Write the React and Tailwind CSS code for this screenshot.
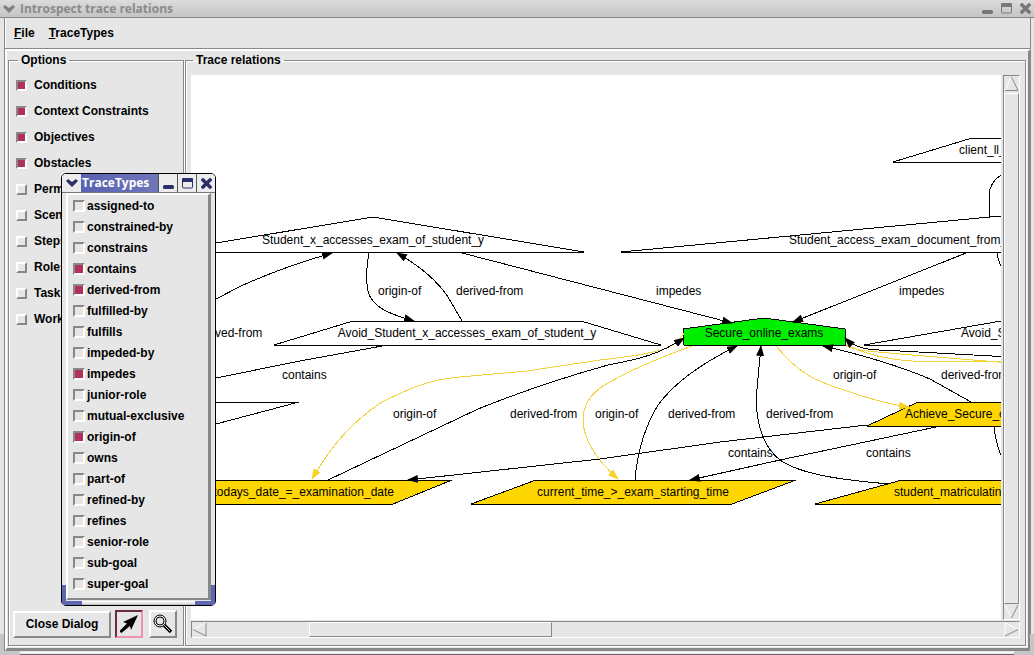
import { useState } from "react";

const OPTIONS = [
  { name: "Conditions", on: true },
  { name: "Context Constraints", on: true },
  { name: "Objectives", on: true },
  { name: "Obstacles", on: true },
  { name: "Permissions", on: false },
  { name: "Scenarios", on: false },
  { name: "Steps", on: false },
  { name: "Roles", on: false },
  { name: "Tasks", on: false },
  { name: "Workflows", on: false },
];

const TRACE_TYPES = [
  "assigned-to",
  "constrained-by",
  "constrains",
  "contains",
  "derived-from",
  "fulfilled-by",
  "fulfills",
  "impeded-by",
  "impedes",
  "junior-role",
  "mutual-exclusive",
  "origin-of",
  "owns",
  "part-of",
  "refined-by",
  "refines",
  "senior-role",
  "sub-goal",
  "super-goal",
];

const ACTIVE_TYPES = ["contains", "derived-from", "impedes", "origin-of"];

const GOLD = "#ffd700";
const GREEN = "#00ee00";

// anchor defaults to "start"
const NODES = [
  { points: "162,252 373,217 584,252", text: "Student_x_accesses_exam_of_student_y", x: 373, y: 244, anchor: "middle" },
  { points: "621,252 990,217 1200,216 1200,252", text: "Student_access_exam_document_from_server", x: 789, y: 244 },
  { points: "893,162 972,138 1200,138 1200,162", text: "client_ll_connection", x: 959, y: 154 },
  { points: "274,345 353,321 581,321 661,345", text: "Avoid_Student_x_accesses_exam_of_student_y", x: 467, y: 337, anchor: "middle" },
  { points: "683,329 764,318 845,329 845,345 684,345", text: "Secure_online_exams", x: 764, y: 337, anchor: "middle", fill: GREEN },
  { points: "864,345 1001,321 1200,321 1200,345", text: "Avoid_Student_access", x: 961, y: 337 },
  { points: "100,402 299,402 216,424 100,424", text: "", x: 0, y: 0 },
  { points: "100,480 452,480 393,504 100,504", text: "todays_date_=_examination_date", x: 394, y: 496, anchor: "end", fill: GOLD },
  { points: "471,504 536,480 796,480 732,504", text: "current_time_>_exam_starting_time", x: 633, y: 496, anchor: "middle", fill: GOLD },
  { points: "815,504 902,480 1200,480 1200,504", text: "student_matriculating", x: 894, y: 496, fill: GOLD },
  { points: "867,426 918,402 1200,402 1200,426", text: "Achieve_Secure_online_exams", x: 905, y: 418, fill: GOLD },
];

const EDGES = [
  { d: "M200 307L216 299L241 286Q283 267 332 253", arrow: true },
  { d: "M369 253C366 268 366 280 368 291C372 308 390 314 414 321", arrow: true },
  { d: "M462 321L448 297Q432 273 397 253", arrow: true },
  { d: "M462 253L732 323", arrow: true },
  { d: "M966 253L793 322", arrow: true },
  { d: "M382 346L300 361L216 378L190 384" },
  { d: "M684 333C676 345 674 352 600 360L527 371L460 377C425 380 405 391 382 402C350 423 330 448 312 479", arrow: true, gold: true },
  { d: "M328 480L440 427L478 409Q540 384 608 365C640 359 660 354 684 338", arrow: true },
  { d: "M692 346C650 361 625 373 603 386C570 408 580 445 618 479", arrow: true, gold: true },
  { d: "M635 480C637 455 643 430 658 405C675 382 700 364 737 346", arrow: true },
  { d: "M890 484C840 480 800 474 780 460C763 447 757 425 756 400L761 346", arrow: true },
  { d: "M776 346C800 374 812 380 850 392Q885 404 909 407", arrow: true, gold: true },
  { d: "M971 402L930 379Q885 360 823 346", arrow: true },
  { d: "M846 345C852 350 865 351 900 354L1010 363", gold: true },
  { d: "M846 345C870 356 890 360 912 361L1010 362", gold: true },
  { d: "M1010 357L900 351C870 350 857 350 845 338", arrow: true },
  { d: "M867 425L720 442L600 459L408 480", arrow: true },
  { d: "M936 427L780 460L690 480", arrow: true },
  { d: "M989 217V195Q990 182 1001 175" },
  { d: "M997 253Q998 262 1003 269" },
  { d: "M994 427Q996 445 1003 460" },
];

const EDGE_LABELS = [
  ["origin-of", 378, 295],
  ["derived-from", 456, 295],
  ["impedes", 656, 295],
  ["impedes", 899, 295],
  ["derived-from", 195, 337],
  ["contains", 282, 379],
  ["origin-of", 833, 379],
  ["derived-from", 941, 379],
  ["origin-of", 393, 418],
  ["derived-from", 510, 418],
  ["origin-of", 595, 418],
  ["derived-from", 668, 418],
  ["derived-from", 766, 418],
  ["contains", 728, 457],
  ["contains", 866, 457],
];

function Graph() {
  return (
    <svg className="block h-full w-full bg-white" aria-label="Trace relations">
      <defs>
        <marker id="head" markerWidth="11" markerHeight="8" refX="10" refY="4" orient="auto" markerUnits="userSpaceOnUse">
          <path d="M0 0L11 4L0 8Z" fill="#000" />
        </marker>
        <marker id="headGold" markerWidth="11" markerHeight="8" refX="10" refY="4" orient="auto" markerUnits="userSpaceOnUse">
          <path d="M0 0L11 4L0 8Z" fill="#f5d327" />
        </marker>
      </defs>
      {/* scroll offset of the visible part */}
      <g transform="translate(-191 -75)">
        {NODES.map((n, i) => (
          <polygon key={i} points={n.points} fill={n.fill || "#fff"} stroke="#000" shapeRendering="crispEdges" />
        ))}
        {EDGES.map((e, i) => (
          <path
            key={i}
            d={e.d}
            fill="none"
            stroke={e.gold ? "#f2d33c" : "#000"}
            shapeRendering="crispEdges"
            markerEnd={e.arrow ? (e.gold ? "url(#headGold)" : "url(#head)") : undefined}
          />
        ))}
        {NODES.map((n, i) => (
          <text key={i} x={n.x} y={n.y} textAnchor={n.anchor || "start"} className="text-[12px]">
            {n.text}
          </text>
        ))}
        {EDGE_LABELS.map(([text, x, y], i) => (
          <text key={i} x={x} y={y} className="text-[12px]">
            {text}
          </text>
        ))}
      </g>
    </svg>
  );
}

function OptionCheck({ item }) {
  const [on, setOn] = useState(item.on);
  return (
    <label className="flex h-[26px] items-center gap-[7px]">
      <input
        type="checkbox"
        checked={on}
        onChange={() => setOn(!on)}
        className="size-[11px] shrink-0 appearance-none border-2 border-t-white border-r-[#888] border-b-[#888] border-l-white checked:border-t-[#888] checked:border-r-white checked:border-b-white checked:border-l-[#888] checked:bg-[#b03060]"
      />
      {item.name}
    </label>
  );
}

function TypeCheck({ name }) {
  const [on, setOn] = useState(ACTIVE_TYPES.includes(name));
  return (
    <label className="flex h-[21px] items-center gap-[2px] font-bold">
      <input
        type="checkbox"
        checked={on}
        onChange={() => setOn(!on)}
        className="size-3 shrink-0 appearance-none border-2 border-t-[#888] border-r-white border-b-white border-l-[#888] checked:bg-[#b03060]"
      />
      {name}
    </label>
  );
}

function MenuChevron({ color }) {
  return (
    <svg width="12" height="8" viewBox="0 0 12 8" aria-hidden="true">
      <path d="M0 2L2 0L6 3L10 0L12 2L6 8Z" fill={color} />
    </svg>
  );
}

function MinimizeIcon({ color }) {
  return (
    <svg width="11" height="11" viewBox="0 0 11 11" aria-hidden="true">
      <rect x="0" y="7" width="11" height="4" rx="1.5" fill={color} />
    </svg>
  );
}

function MaximizeIcon({ color }) {
  return (
    <svg width="11" height="11" viewBox="0 0 11 11" aria-hidden="true">
      <rect x="0.5" y="0.5" width="10" height="9.5" rx="1" fill="none" stroke={color} />
      <rect x="0" y="0" width="11" height="4" rx="1" fill={color} />
    </svg>
  );
}

function CloseIcon({ color }) {
  return (
    <svg width="11" height="11" viewBox="0 0 11 11" aria-hidden="true">
      <path d="M2 2L9 9M9 2L2 9" stroke={color} strokeWidth="3.4" strokeLinecap="square" />
    </svg>
  );
}

function ScrollArrow({ label, light, dark }) {
  return (
    <button type="button" aria-label={label} className="size-[15px] shrink-0">
      <svg width="15" height="15" viewBox="0 0 15 15" fill="none">
        <path d={light} stroke="#fff" />
        <path d={dark} stroke="#888" />
      </svg>
    </button>
  );
}

function TraceTypesWindow() {
  return (
    <div className="absolute top-[173px] left-[61px] flex w-[155px] flex-col rounded-[5px] border border-black bg-[#e6e6e6]">
      <div className="flex h-[19px] items-stretch rounded-t-[4px] border-b border-[#777] bg-[#ececec]">
        <button type="button" aria-label="Window menu" className="flex w-[19px] items-center justify-center">
          <MenuChevron color="#2a2f66" />
        </button>
        <h2 className="flex flex-1 items-center bg-linear-to-r from-[#5a62b2] to-[#6f76b8] pl-px font-['Open_Sans',sans-serif] text-[12px] font-bold text-white">
          TraceTypes
        </h2>
        <button type="button" aria-label="Minimize" className="flex w-[19px] items-center justify-center border-l border-[#555]">
          <MinimizeIcon color="#2a2f66" />
        </button>
        <button type="button" aria-label="Maximize" className="flex w-[19px] items-center justify-center border-l border-[#555]">
          <MaximizeIcon color="#2a2f66" />
        </button>
        <button type="button" aria-label="Close" className="flex w-[19px] items-center justify-center border-l border-[#555]">
          <CloseIcon color="#2a2f66" />
        </button>
      </div>
      <div className="mx-1 border-t-2 border-r-3 border-b-2 border-l-2 border-t-white border-r-[#888] border-b-[#888] border-l-white pl-[5px]">
        {TRACE_TYPES.map((name) => (
          <TypeCheck key={name} name={name} />
        ))}
        <div className="h-1" />
      </div>
      <div className="mt-px h-1 border-y border-t-white border-b-[#bbb]" />
      {/* resize grips */}
      <div className="absolute bottom-0 left-0 h-5 w-5 rounded-bl-[4px] border-b-4 border-l-4 border-[#5f67b5]" />
      <div className="absolute right-0 bottom-0 h-5 w-5 rounded-br-[4px] border-r-4 border-b-4 border-[#5f67b5]" />
    </div>
  );
}

export default function App() {
  return (
    <div className="relative flex h-screen flex-col overflow-hidden bg-[#e6e6e6] font-['Liberation_Sans',Arial,sans-serif] text-[12px] leading-[14px] text-black">
      <header className="flex h-[18px] shrink-0 items-center border-b border-[#888] bg-linear-to-b from-[#dcdcdc] to-[#c4c4c4] pl-[3px]">
        <button type="button" aria-label="Window menu">
          <MenuChevron color="#808080" />
        </button>
        <h1 className="flex-1 pl-[5px] font-['Open_Sans',sans-serif] text-[12px] font-bold text-[#8a8a8a]">
          Introspect trace relations
        </h1>
        <div className="flex items-center gap-2 pr-[3px]">
          <button type="button" aria-label="Minimize">
            <MinimizeIcon color="#777" />
          </button>
          <button type="button" aria-label="Maximize">
            <MaximizeIcon color="#777" />
          </button>
          <button type="button" aria-label="Close">
            <CloseIcon color="#777" />
          </button>
        </div>
      </header>

      {/* resize grips of the outer window, under its frame */}
      <div className="absolute bottom-0 left-0 h-[21px] w-5 border-b-4 border-l-4 border-[#c6c6c6]" />
      <div className="absolute right-0 bottom-0 h-[21px] w-5 border-r-4 border-b-4 border-[#c6c6c6]" />

      <div className="mr-[3px] ml-[4px] flex min-h-0 flex-1 flex-col border-l border-[#888] shadow-[inset_1px_0_0_#fff]">
        <nav className="flex h-[31px] shrink-0 items-center gap-[14px] border-r border-b border-[#888] pl-[9px] font-bold">
          <button type="button">
            <span className="underline">F</span>ile
          </button>
          <button type="button">
            <span className="underline">T</span>raceTypes
          </button>
        </nav>

        <main className="flex min-h-0 flex-1 gap-px border-t-2 border-r-3 border-b-3 border-l-2 border-t-white border-r-[#888] border-b-[#888] border-l-white pt-[2px] pr-[2px] pb-[2px] pl-px">
          <fieldset className="flex w-[176px] shrink-0 flex-col border border-[#888] shadow-[1px_1px_0_#fff,inset_1px_1px_0_#fff]">
            <legend className="ml-[9px] px-[3px] font-bold">Options</legend>
            <div className="flex h-full flex-col justify-between pt-[5px] pb-[7px]">
              <div className="pl-[7px] font-bold">
                {OPTIONS.map((item) => (
                  <OptionCheck key={item.name} item={item} />
                ))}
              </div>
              <div className="flex items-center gap-1 pl-1">
                <button
                  type="button"
                  className="h-[27px] w-[98px] border-2 border-t-white border-r-[#888] border-b-[#888] border-l-white font-bold"
                >
                  Close Dialog
                </button>
                <button
                  type="button"
                  aria-label="Select"
                  className="flex size-[28px] items-center justify-center border-2 border-t-[#6e2a40] border-r-[#f092ac] border-b-[#f092ac] border-l-[#6e2a40]"
                >
                  <svg width="20" height="20" viewBox="0 0 20 20">
                    <path d="M19 1L4 8L8 9.5L1 16.5V18L2.5 19L11 12L12 16Z" fill="#000" />
                  </svg>
                </button>
                <button
                  type="button"
                  aria-label="Zoom"
                  className="ml-[2px] flex size-[28px] items-center justify-center border-2 border-t-white border-r-[#888] border-b-[#888] border-l-white"
                >
                  <svg width="20" height="20" viewBox="0 0 20 20" fill="none">
                    <circle cx="7" cy="7" r="6" stroke="#000" />
                    <circle cx="7" cy="7" r="4" stroke="#000" />
                    <path d="M11 11L18 18" stroke="#000" strokeWidth="3.5" />
                    <path d="M11 11L17 17" stroke="#ccc" strokeWidth="1" />
                  </svg>
                </button>
              </div>
            </div>
          </fieldset>

          <fieldset className="min-w-0 flex-1 border border-[#888] shadow-[1px_1px_0_#fff,inset_1px_1px_0_#fff]">
            <legend className="ml-[7px] px-[3px] font-bold">Trace relations</legend>
            <div className="flex h-full flex-col pt-2 pr-[5px] pb-[7px] pl-[5px]">
              <div className="flex min-h-0 flex-1 gap-[2px]">
                <div className="min-w-0 flex-1">
                  <Graph />
                </div>
                <div className="flex w-[17px] flex-col border border-t-[#888] border-r-white border-b-white border-l-[#888]">
                  <ScrollArrow label="Scroll up" light="M7.5 1L1 14.5" dark="M7.5 1L14 14.5H1" />
                  <div className="mt-[2px] flex-1 border border-t-white border-r-[#888] border-b-[#888] border-l-white" />
                  <ScrollArrow label="Scroll down" light="M1 1L7.5 14" dark="M14 1L7.5 14" />
                </div>
              </div>
              <div className="mt-px flex h-[17px] border border-t-[#888] border-r-white border-b-white border-l-[#888]">
                <ScrollArrow label="Scroll left" light="M14 1L1 7.5" dark="M1 7.5L14 14V1" />
                <div className="flex flex-1 pl-[102px]">
                  <div className="w-[35%] border border-t-white border-r-[#888] border-b-[#888] border-l-white" />
                </div>
                <ScrollArrow label="Scroll right" light="M1 14V1L14 7.5" dark="M1 14L14 7.5" />
              </div>
            </div>
          </fieldset>
        </main>
      </div>
      <div className="mt-px h-[3px] shrink-0 border-t border-b border-t-white border-b-[#666]" />

      <TraceTypesWindow />
    </div>
  );
}
